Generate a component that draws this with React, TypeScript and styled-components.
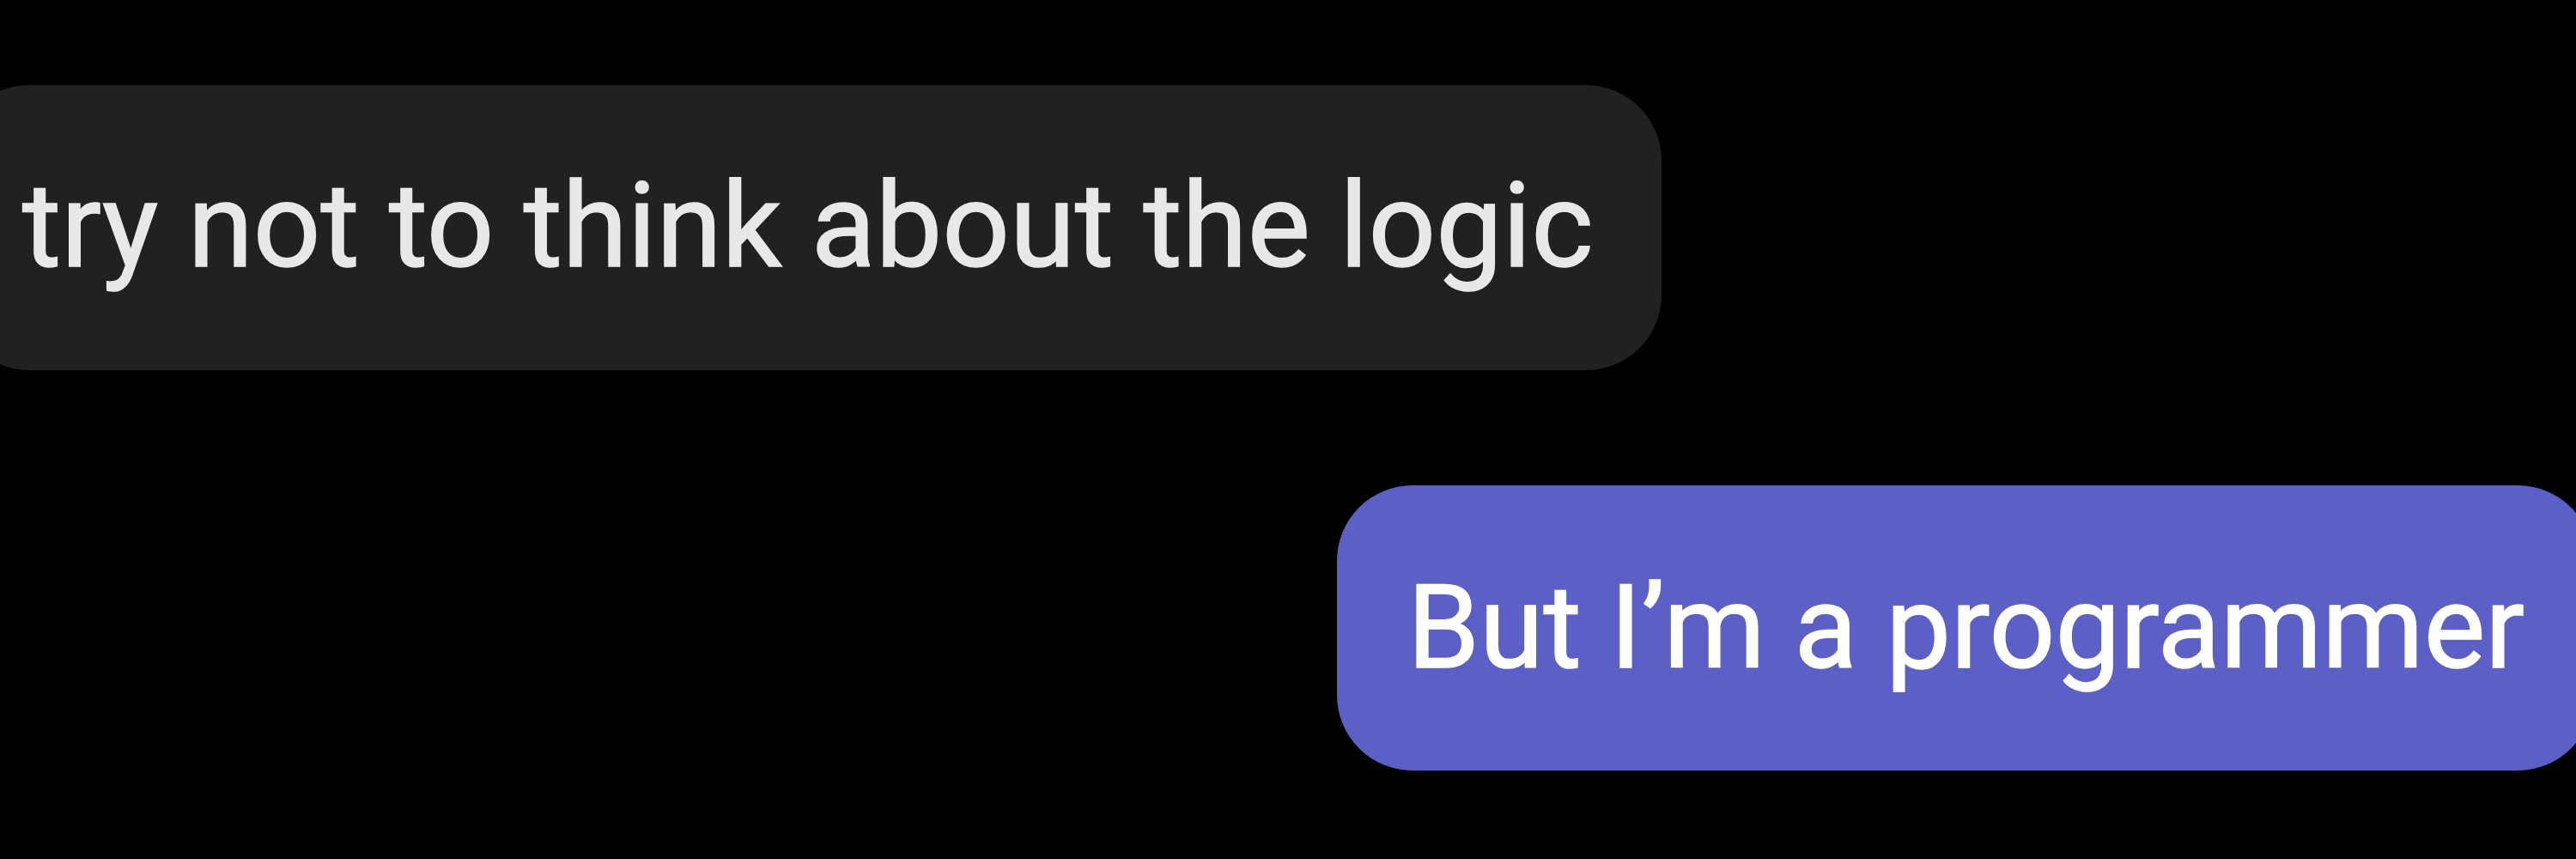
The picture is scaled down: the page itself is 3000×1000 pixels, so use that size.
import React from "react";
import styled, { createGlobalStyle } from "styled-components";

const GlobalStyle = createGlobalStyle`
  html, body {
    margin: 0;
    padding: 0;
    background: #000;
    overflow: hidden;
  }
  body {
    font-family: Roboto, "Noto Sans", sans-serif;
  }
`;

const Thread = styled.div`
  width: 3000px;
  height: 1000px;
  background: #000;
  display: flex;
  flex-direction: column;
  padding-top: 99px;
  gap: 134px;
  box-sizing: border-box;
`;

const Row = styled.div<{ $mine?: boolean }>`
  display: flex;
  justify-content: ${(p) => (p.$mine ? "flex-end" : "flex-start")};
`;

const Bubble = styled.div<{ $mine?: boolean }>`
  height: 332px;
  box-sizing: border-box;
  border-radius: 88px;
  white-space: nowrap;
  background: ${(p) => (p.$mine ? "#5c5fc6" : "#212121")};
  color: ${(p) => (p.$mine ? "#ffffff" : "#e8e8e8")};
  font-size: ${(p) => (p.$mine ? "135px" : "138px")};
  line-height: ${(p) => (p.$mine ? "158px" : "162px")};
  -webkit-text-stroke: 1.5px currentColor;
  padding: ${(p) => (p.$mine ? "87px 80px 87px 82px" : "83px 79px 87px 80px")};
  margin: ${(p) => (p.$mine ? "0 -20px 0 0" : "0 0 0 -54px")};
`;

const messages = [
  { text: "try not to think about the logic", mine: false },
  { text: "But I\u2019m a programmer", mine: true },
];

export default function App() {
  return (
    <>
      <GlobalStyle />
      <Thread>
        {messages.map((m) => (
          <Row key={m.text} $mine={m.mine}>
            <Bubble $mine={m.mine}>{m.text}</Bubble>
          </Row>
        ))}
      </Thread>
    </>
  );
}
